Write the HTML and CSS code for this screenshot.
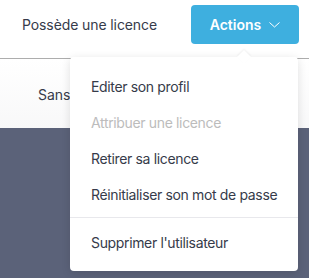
FILE: index.html
```html
<!DOCTYPE html>
<html lang="fr">
<head>
    <meta charset="UTF-8">
    <title>Utilisateur</title>
    <link rel="stylesheet" href="styles.css">
</head>
<body>
    <div class="page">
        <div class="header">
            <div class="status">Possède une licence</div>
            <div class="actions">
                <div class="btn">Actions
                    <svg class="chevron" width="11" height="6" viewBox="0 0 11 6">
                        <path d="M0.5 0.5 L5.5 5 L10.5 0.5" fill="none" stroke="#fff" stroke-width="1"/>
                    </svg>
                </div>
                <div class="menu">
                    <div class="item">Editer son profil</div>
                    <div class="item disabled">Attribuer une licence</div>
                    <div class="item">Retirer sa licence</div>
                    <div class="item">Réinitialiser son mot de passe</div>
                    <div class="divider"></div>
                    <div class="item">Supprimer l'utilisateur</div>
                </div>
            </div>
        </div>
        <div class="tabs">
            <div class="tab">Sans</div>
        </div>
        <div class="content"></div>
    </div>
</body>
</html>
```

FILE: styles.css
```css
* {
    box-sizing: border-box;
    margin: 0;
    padding: 0;
    font-family: Inter, Roboto, sans-serif;
    color: #363b4a;
}

body {
    background: #5b6279;
}

.page {
    display: flex;
    flex-direction: column;
    height: 100vh;
}

.header {
    height: 59px;
    background: #fff;
    border-bottom: 1px solid #adadad;

    display: flex;
    align-items: center;
    justify-content: space-between;
    padding: 0 10px 9px 22px;
}

.status {
    font-size: 14px;
    letter-spacing: -0.1px;
}

.actions {
    position: relative;
}

.btn {
    width: 108px;
    height: 39px;
    background: #3eafdf;
    border-radius: 4px;
    color: #fff;
    font-size: 14px;
    font-weight: 600;

    display: flex;
    align-items: center;
    justify-content: center;
    gap: 8px;
}

.chevron {
    margin-top: 1px;
}

.menu {
    position: absolute;
    top: 52px;
    right: 1px;
    width: 228px;
    background: #fff;
    border-radius: 4px;
    box-shadow: 0 2px 10px rgba(0, 0, 0, 0.12);
    padding: 11px 0 11px;
    z-index: 2;
}

.menu::before {
    content: "";
    position: absolute;
    top: -5px;
    right: 49px;
    width: 10px;
    height: 10px;
    background: #fff;
    transform: rotate(45deg);
    box-shadow: -1px -1px 2px rgba(0, 0, 0, 0.05);
}

.item {
    height: 36px;
    padding: 0 21px;
    font-size: 14px;
    letter-spacing: -0.35px;
    white-space: nowrap;
    color: #363b4a;

    display: flex;
    align-items: center;
}

.item.disabled {
    color: #bcbcbc;
}

.divider {
    height: 1px;
    background: #e8e8ec;
    margin: 5px 0 6px;
}

.tabs {
    height: 69px;
    background: linear-gradient(#fff, #f8f8f9);
    display: flex;
    align-items: center;
    padding-left: 38px;
    padding-top: 2px;
}

.tab {
    font-size: 14px;
}

.content {
    flex: 1;
    background: #5b6279;
}
```
